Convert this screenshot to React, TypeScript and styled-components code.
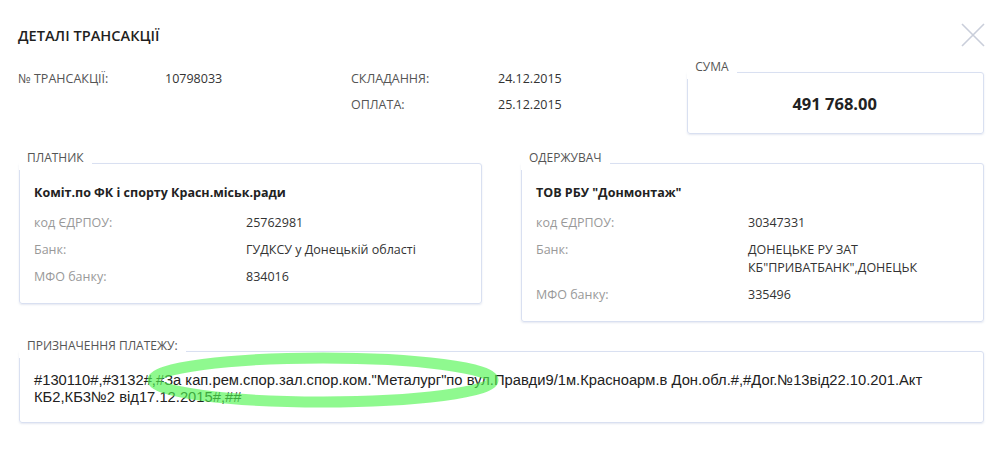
import React from "react";
import styled, { createGlobalStyle } from "styled-components";

const Global = createGlobalStyle`
  html, body { margin: 0; padding: 0; background: #fff; }
  body { font-family: "Open Sans", "Noto Sans", sans-serif; color: #333; }
  * { box-sizing: border-box; }
`;

const Page = styled.div`
  width: 1000px;
  height: 453px;
  padding: 22px 16px 0 19px;
  display: flex;
  flex-direction: column;
`;

const Header = styled.div`
  display: flex;
  justify-content: space-between;
  align-items: flex-start;
  height: 32px;
`;

const Title = styled.h1`
  margin: 3px 0 0 -1px;
  font-size: 14.6px;
  font-weight: 600;
  color: #1f1f1f;
  line-height: 20px;
`;

const Close = styled.button`
  border: 0;
  background: none;
  padding: 0;
  margin: 0 -2px 0 0;
  width: 26px;
  height: 26px;
  cursor: pointer;
`;

const TopRow = styled.div`
  display: flex;
  align-items: flex-start;
  margin-top: 16px;
`;

const Meta = styled.div`
  display: flex;
  width: 669px;
`;

const MetaGroup = styled.div<{ $w: number; $span: number }>`
  display: grid;
  grid-template-columns: ${(p) => p.$w}px auto;
  grid-auto-rows: 26px;
  width: ${(p) => p.$span}px;
  margin-left: -1px;
`;

const MetaLabel = styled.span`
  font-size: 12.5px;
  color: #555;
  line-height: 18px;
`;

const MetaValue = styled.span`
  font-size: 12.5px;
  color: #333;
  line-height: 18px;
`;

const Box = styled.div`
  position: relative;
  border: 1px solid #d9e0f1;
  border-radius: 3px;
  box-shadow: 0 1px 2px rgba(180, 190, 215, 0.35);
`;

const Legend = styled.span`
  position: absolute;
  left: -1px;
  top: -15px;
  background: #fff;
  padding: 0 8px;
  font-size: 12px;
  color: #555;
  line-height: 18px;
  height: 21px;
`;

const SumBox = styled(Box)`
  width: 297px;
  height: 62px;
  margin-top: 2px;
  display: flex;
  align-items: center;
  justify-content: center;
`;

const SumValue = styled.span`
  font-size: 16.5px;
  font-weight: 700;
  color: #222;
  margin: 1px 0 0 -2px;
`;

const Parties = styled.div`
  display: flex;
  justify-content: space-between;
  align-items: flex-start;
  margin-top: 29px;
`;

const PartyBox = styled(Box)`
  width: 463px;
  padding: 20px 14px 17px 14px;
`;

const PartyName = styled.div`
  font-size: 12.5px;
  font-weight: 700;
  color: #222;
  line-height: 18px;
  margin-bottom: 12px;
`;

const Rows = styled.div`
  display: grid;
  grid-template-columns: 212px 1fr;
  row-gap: 9px;
`;

const RowLabel = styled.span`
  font-size: 12.5px;
  color: #999;
  line-height: 18px;
`;

const RowValue = styled.span`
  font-size: 12.5px;
  color: #333;
  line-height: 18px;
`;

const PurposeBox = styled(Box)`
  margin-top: 29px;
  height: 72px;
  padding: 20px 14px 0 14px;
`;

const PurposeText = styled.p`
  margin: 0;
  font-family: "Liberation Sans", Arial, sans-serif;
  font-size: 14.75px;
  line-height: 17px;
  color: #222;
  width: 930px;
  white-space: nowrap;
`;

const Marker = styled.svg`
  position: absolute;
  left: 120px;
  top: -3px;
  width: 400px;
  height: 64px;
  overflow: visible;
  pointer-events: none;
`;

type Row = { label: string; value: React.ReactNode };

const Party = ({ legend, name, rows }: { legend: string; name: string; rows: Row[] }) => (
  <PartyBox>
    <Legend>{legend}</Legend>
    <PartyName>{name}</PartyName>
    <Rows>
      {rows.map((r) => (
        <React.Fragment key={r.label}>
          <RowLabel>{r.label}</RowLabel>
          <RowValue>{r.value}</RowValue>
        </React.Fragment>
      ))}
    </Rows>
  </PartyBox>
);

export default function App() {
  return (
    <>
      <Global />
      <Page>
        <Header>
          <Title>ДЕТАЛІ ТРАНСАКЦІЇ</Title>
          <Close aria-label="close">
            <svg width="26" height="26" viewBox="0 0 26 26">
              <path d="M2 2 L24 24 M24 2 L2 24" stroke="#c9ceda" strokeWidth="1.6" fill="none" />
            </svg>
          </Close>
        </Header>
        <TopRow>
          <Meta>
            <MetaGroup $w={147} $span={334}>
              <MetaLabel>№ ТРАНСАКЦІЇ:</MetaLabel>
              <MetaValue>10798033</MetaValue>
            </MetaGroup>
            <MetaGroup $w={147} $span={300}>
              <MetaLabel>СКЛАДАННЯ:</MetaLabel>
              <MetaValue>24.12.2015</MetaValue>
              <MetaLabel>ОПЛАТА:</MetaLabel>
              <MetaValue>25.12.2015</MetaValue>
            </MetaGroup>
          </Meta>
          <SumBox>
            <Legend>СУМА</Legend>
            <SumValue>491 768.00</SumValue>
          </SumBox>
        </TopRow>
        <Parties>
          <Party
            legend="ПЛАТНИК"
            name="Коміт.по ФК і спорту Красн.міськ.ради"
            rows={[
              { label: "код ЄДРПОУ:", value: "25762981" },
              { label: "Банк:", value: "ГУДКСУ у Донецькій області" },
              { label: "МФО банку:", value: "834016" },
            ]}
          />
          <Party
            legend="ОДЕРЖУВАЧ"
            name={'ТОВ РБУ "Донмонтаж"'}
            rows={[
              { label: "код ЄДРПОУ:", value: "30347331" },
              {
                label: "Банк:",
                value: (
                  <>
                    ДОНЕЦЬКЕ РУ ЗАТ
                    <br />
                    КБ"ПРИВАТБАНК",ДОНЕЦЬК
                  </>
                ),
              },
              { label: "МФО банку:", value: "335496" },
            ]}
          />
        </Parties>
        <PurposeBox>
          <Legend>ПРИЗНАЧЕННЯ ПЛАТЕЖУ:</Legend>
          <PurposeText>
            #130110#,#3132#,#За кап.рем.спор.зал.спор.ком."Металург"по вул.Правди9/1м.Красноарм.в Дон.обл.#,#Дог.№13від22.10.201.Акт
            <br />
            КБ2,КБ3№2 від17.12.2015#,##
          </PurposeText>
          <Marker viewBox="0 0 400 64">
            <ellipse cx="183" cy="31" rx="170" ry="22" fill="none" stroke="rgba(80,245,80,0.64)" strokeWidth="11" />
          </Marker>
        </PurposeBox>
      </Page>
    </>
  );
}
